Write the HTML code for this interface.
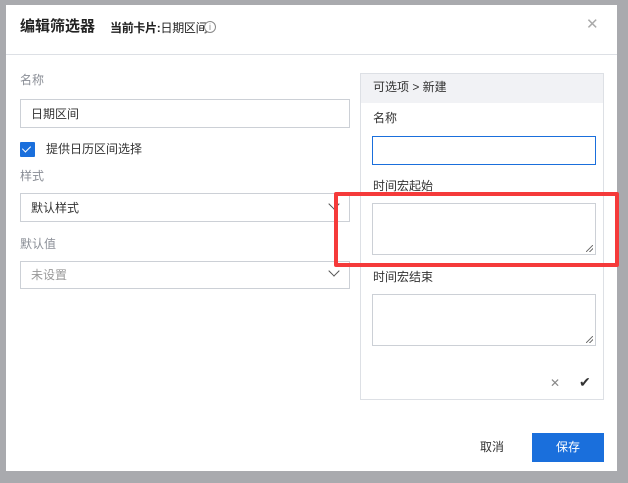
<!DOCTYPE html><html><head><meta charset="utf-8"><style>
*{box-sizing:border-box;margin:0;padding:0}
body{width:628px;height:483px;overflow:hidden;background:#a9aaae;font-family:"Liberation Sans","Noto Sans CJK SC",sans-serif;position:relative;font-size:12px;line-height:14px;color:#333}
.abs{position:absolute}
.modal{left:6px;top:5px;width:611px;height:466px;background:#fff}
.in{position:absolute;border:1px solid #ccd0d6;background:#fff}
.lbl{position:absolute;color:#8a8e96;font-size:12px}
.dark{color:#333}
.chev{position:absolute;width:8px;height:8px;border-right:1.3px solid #555;border-bottom:1.3px solid #555;transform:rotate(45deg)}
.grip{position:absolute;right:2px;bottom:2px;width:7px;height:7px;background:linear-gradient(135deg,transparent 45%,#777 45%,#777 55%,transparent 55%,transparent 70%,#777 70%,#777 80%,transparent 80%)}
</style></head><body>
<div class="abs modal">
<div class="abs" style="left:14px;top:14px;font-size:15px;line-height:16px;font-weight:bold;color:#222">编辑筛选器</div>
<div class="abs" style="left:104px;top:16px;font-size:12px;letter-spacing:-0.3px;color:#222"><b>当前卡片:</b>日期区间</div>
<div class="abs" style="left:198px;top:16px;width:12px;height:12px;border:1px solid #888;border-radius:50%;font-size:9px;color:#888;text-align:center;line-height:10px;background:#fff">i</div>
<div class="abs" style="left:580px;top:12px;font-size:15px;line-height:16px;color:#aaa">✕</div>
<div class="abs" style="left:0;top:49px;width:611px;height:1px;background:#dde0e5"></div>
<div class="lbl" style="left:14px;top:68px">名称</div>
<div class="in" style="left:14px;top:94px;width:330px;height:29px"><span class="abs dark" style="left:10px;top:7px">日期区间</span></div>
<div class="abs" style="left:14px;top:137px;width:15px;height:15px;background:#1a6fdc;border-radius:1px"><span class="abs" style="left:4px;top:2px;width:5px;height:8px;border-right:1.5px solid #fff;border-bottom:1.5px solid #fff;transform:rotate(45deg)"></span></div>
<div class="abs dark" style="left:40px;top:137px">提供日历区间选择</div>
<div class="lbl" style="left:14px;top:164px">样式</div>
<div class="in" style="left:14px;top:188px;width:330px;height:29px"><span class="abs dark" style="left:10px;top:7px">默认样式</span><div class="chev" style="right:11px;top:6px"></div></div>
<div class="lbl" style="left:14px;top:232px">默认值</div>
<div class="in" style="left:14px;top:256px;width:330px;height:28px"><span class="abs" style="left:10px;top:6px;color:#999">未设置</span><div class="chev" style="right:11px;top:5px"></div></div>
<div class="abs" style="left:354px;top:68px;width:244px;height:327px;border:1px solid #dde0e5"></div>
<div class="abs" style="left:355px;top:69px;width:242px;height:29px;background:#f1f2f5"></div>
<div class="abs dark" style="left:367px;top:75px">可选项 &gt; 新建</div>
<div class="abs dark" style="left:367px;top:106px">名称</div>
<div class="in" style="left:366px;top:131px;width:224px;height:29px;border-color:#1a6fdc"></div>
<div class="abs dark" style="left:367px;top:174px">时间宏起始</div>
<div class="in" style="left:366px;top:198px;width:224px;height:52px"><div class="grip"></div></div>
<div class="abs dark" style="left:367px;top:265px">时间宏结束</div>
<div class="in" style="left:366px;top:289px;width:224px;height:52px"><div class="grip"></div></div>
<div class="abs" style="left:544px;top:371px;font-size:12px;color:#888">✕</div>
<div class="abs" style="left:573px;top:370px;font-size:14px;color:#333">✔</div>
<div class="abs dark" style="left:474px;top:435px">取消</div>
<div class="abs" style="left:526px;top:428px;width:72px;height:29px;background:#1a6fdc;color:#fff;text-align:center;line-height:29px">保存</div>
</div>
<div class="abs" style="left:334px;top:192px;width:285px;height:75px;border:4px solid #f53a3a;border-radius:2px"></div>
</body></html>
